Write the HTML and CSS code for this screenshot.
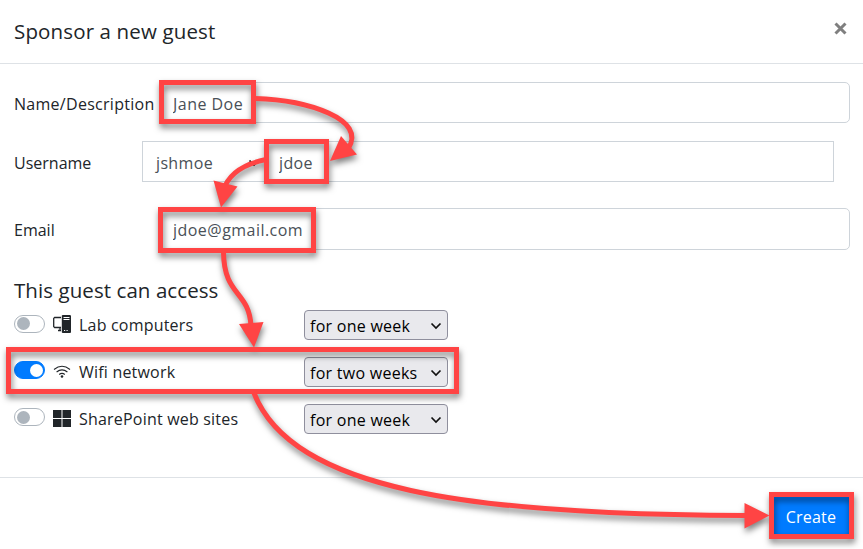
FILE: index.html
```
<!DOCTYPE html>
<html lang="en">
  <head>
    <meta charset="UTF-8" />
    <title>Sponsor a new guest</title>
    <meta name="viewport" content="width=device-width, initial-scale=1.0" />
    <link rel="stylesheet" href="styles.css">
  </head>
  <body>
    <div class="modal">
      <div class="modal-header">
        <h1>Sponsor a new guest</h1>
        <button class="close" aria-label="Close">
          <svg width="13" height="13" viewBox="0 0 13 13"><path d="M1.500 1.500l10 10M11.500 1.500l-10 10" /></svg>
        </button>
      </div>
      <div class="modal-body">
        <div class="field">
          <label class="name-label" for="name">Name/Description</label>
          <input class="input name" id="name" type="text" value="Jane Doe" />
        </div>
        <div class="field username">
          <label for="user">Username</label>
          <div class="group">
            <div class="prefix">
              <span class="prefix-text">jshmoe</span>
              <svg class="chevron" width="12" height="8" viewBox="0 0 12 8"><path d="M1.500 1.500L6 6l4.500-4.500" /></svg>
            </div>
            <input class="suffix" id="user" type="text" value="jdoe" />
          </div>
        </div>
        <div class="field email">
          <label for="email">Email</label>
          <input class="input mail" id="email" type="text" value="jdoe@gmail.com" />
        </div>

        <h2>This guest can access</h2>
        <div class="access">
          <span class="switch"></span>
          <svg class="icon" width="18" height="18" viewBox="0 0 18 18">
            <path class="line" d="M8 2.500H1.600L.7 3.400v8.200l.9.900H8M5 15.500h3M7 12.500v3" />
            <path d="M9.500 0h7.800l.7.700v16.600l-.7.700H9.500l-.7-.7V.7z" />
            <path class="cut" d="M10.500 2.500h6M10.500 4.500h6M11 15.500h1.200M13.500 15.500h1.200" />
          </svg>
          <span class="access-name">Lab computers</span>
          <div class="select"><span>for one week</span><svg class="chevron" width="12" height="8" viewBox="0 0 12 8"><path d="M1.500 1.500L6 6l4.500-4.500" /></svg></div>
        </div>
        <div class="access">
          <span class="switch on"></span>
          <svg class="icon" width="18" height="18" viewBox="0 0 18 18">
            <path class="wave" d="M1 7.500Q9 1.100 17 7.500M3.600 10Q9 5.700 14.400 10M6.200 12.500Q9 10.300 11.800 12.500" />
            <circle cx="9" cy="14.500" r="1.300" />
          </svg>
          <span class="access-name">Wifi network</span>
          <div class="select"><span>for two weeks</span><svg class="chevron" width="12" height="8" viewBox="0 0 12 8"><path d="M1.500 1.500L6 6l4.500-4.500" /></svg></div>
        </div>
        <div class="access">
          <span class="switch"></span>
          <svg class="icon" width="18" height="18" viewBox="0 0 18 18">
            <path d="M0 1h8.500v8H0zM9.500 1H18v8H9.500zM0 10h8.500v8H0zM9.500 10H18v8H9.500z" />
          </svg>
          <span class="access-name">SharePoint web sites</span>
          <div class="select"><span>for one week</span><svg class="chevron" width="12" height="8" viewBox="0 0 12 8"><path d="M1.500 1.500L6 6l4.500-4.500" /></svg></div>
        </div>
      </div>
      <div class="modal-footer">
        <button class="create">Create</button>
      </div>

      <!-- walkthrough highlights and arrows -->
      <svg class="callouts" width="863" height="549" viewBox="0 0 863 549">
        <g class="marks">
          <rect x="161.500" y="82.500" width="92" height="39" />
          <rect x="266.500" y="141.500" width="60" height="40" />
          <rect x="160.500" y="209.500" width="153" height="41" />
          <rect x="8.500" y="349.500" width="448" height="42" />
          <rect x="771.500" y="494.500" width="80" height="42" />
          <path d="M255 98.500C307 100 368 119 348 149" />
          <path d="M266 159.500Q234 166 225 186" />
          <path d="M223.500 252C224 297 249 290 251 326" />
          <path d="M254 393C292 490 470 515 746 515.500" />
        </g>
        <g class="heads">
          <path d="M341 136l16 18.500-27 6.500z" />
          <path d="M213.500 180.500l24 6L221 207.500z" />
          <path d="M239 324l24.500-2L254 347.500z" />
          <path d="M744.500 503v25.500l25-13z" />
        </g>
      </svg>
    </div>
  </body>
</html>
```

FILE: styles.css
```
* {
  box-sizing: border-box;
}
body {
  margin: 0;
  background: #fff;
  color: #212529;
  font-family: "Open Sans", "Noto Sans", sans-serif;
  font-size: 16px;
  overflow: hidden;
}
input,
button {
  font: inherit;
}
.modal {
  position: relative;
  width: 863px;
  height: 549px;
  display: flex;
  flex-direction: column;
}
.modal-header {
  height: 64px;
  padding: 0 16px 0 14px;
  border-bottom: 1px solid #dee2e6;
  display: flex;
  justify-content: space-between;
}
h1 {
  margin: 15px 0 0;
  font-size: 20.5px;
  line-height: 32px;
  font-weight: 400;
  letter-spacing: 0.14px;
}
.close {
  width: 13px;
  height: 13px;
  margin-top: 22px;
  padding: 0;
  border: 0;
  background: none;
}
.close svg {
  display: block;
  fill: none;
  stroke: #7f7f7f;
  stroke-width: 3;
}
.modal-body {
  height: 413px;
  padding: 18px 13px 0 14px;
}
.field {
  height: 41px;
  display: flex;
  align-items: center;
}
.field label {
  width: 145px;
  line-height: 24px;
  padding-top: 2px;
  white-space: nowrap;
}
.field .name-label {
  letter-spacing: 0.28px;
}
.input {
  width: 691px;
  height: 41px;
  border: 1px solid #ced4da;
  border-radius: 5px;
  padding: 2px 13px 0;
  color: #495057;
  letter-spacing: 0.47px;
  outline: 0;
}
.username {
  margin-top: 18px;
}
.field.username label {
  width: 128px;
}
.group {
  display: flex;
  width: 692px;
  height: 41px;
  border: 1px solid #ced4da;
}
.prefix {
  width: 123px;
  display: flex;
  align-items: center;
  justify-content: space-between;
  padding: 2px 6px 0 13px;
  color: #495057;
  letter-spacing: 0.35px;
}
.suffix {
  flex: 1;
  border: 0;
  padding: 2px 13px 0;
  color: #495057;
  letter-spacing: 0.35px;
  outline: 0;
}
.email {
  margin-top: 26px;
  height: 42px;
}
.email .input {
  height: 42px;
}
h2 {
  margin: 25px 0 5px;
  font-size: 20.5px;
  line-height: 30px;
  font-weight: 400;
  letter-spacing: 0.07px;
}
.access {
  display: flex;
  align-items: center;
  height: 30px;
  margin-bottom: 16.8px;
}
.switch {
  width: 31px;
  height: 18px;
  margin: -3px 8px 0 0;
  border: 1px solid #adb5bd;
  border-radius: 9px;
  padding: 1.5px;
}
.switch::before {
  content: "";
  display: block;
  width: 13px;
  height: 13px;
  border-radius: 50%;
  background: #adb5bd;
}
.switch.on {
  border-color: #007bff;
  background: #007bff;
}
.switch.on::before {
  margin-left: 13px;
  background: #fff;
}
.icon {
  fill: #212529;
  margin-right: 8px;
  margin-top: -2px;
}
.icon .line {
  fill: none;
  stroke: #212529;
  stroke-width: 1.3;
}
.icon .cut {
  stroke: #fff;
  stroke-width: 1;
}
.icon .wave {
  fill: none;
  stroke: #212529;
  stroke-width: 1.1;
}
.access-name {
  width: 225px;
  line-height: 24px;
  letter-spacing: 0.2px;
  white-space: nowrap;
}
.select {
  width: 144px;
  height: 30px;
  display: flex;
  align-items: center;
  justify-content: space-between;
  padding: 2px 5px 0;
  border: 1px solid #8f8f9d;
  border-radius: 4px;
  background: #e9e9ed;
  color: #000;
  letter-spacing: 0.27px;
  white-space: nowrap;
}
.chevron {
  fill: none;
  stroke: #111;
  stroke-width: 1.7;
}
.modal-footer {
  height: 72px;
  border-top: 1px solid #dee2e6;
  padding: 17px 12px 0 0;
  display: flex;
  justify-content: flex-end;
}
.create {
  width: 79px;
  height: 41px;
  padding: 3px 1px 0 0;
  border: 0;
  color: #fff;
  background: #007bff;
  letter-spacing: 0.2px;
}
.callouts {
  position: absolute;
  left: 0;
  top: 0;
  filter: drop-shadow(1px 4px 3px rgba(0, 0, 0, 0.5));
}
.marks {
  fill: none;
  stroke: #ff4444;
  stroke-width: 5;
}
.heads {
  fill: #ff4444;
}
```
